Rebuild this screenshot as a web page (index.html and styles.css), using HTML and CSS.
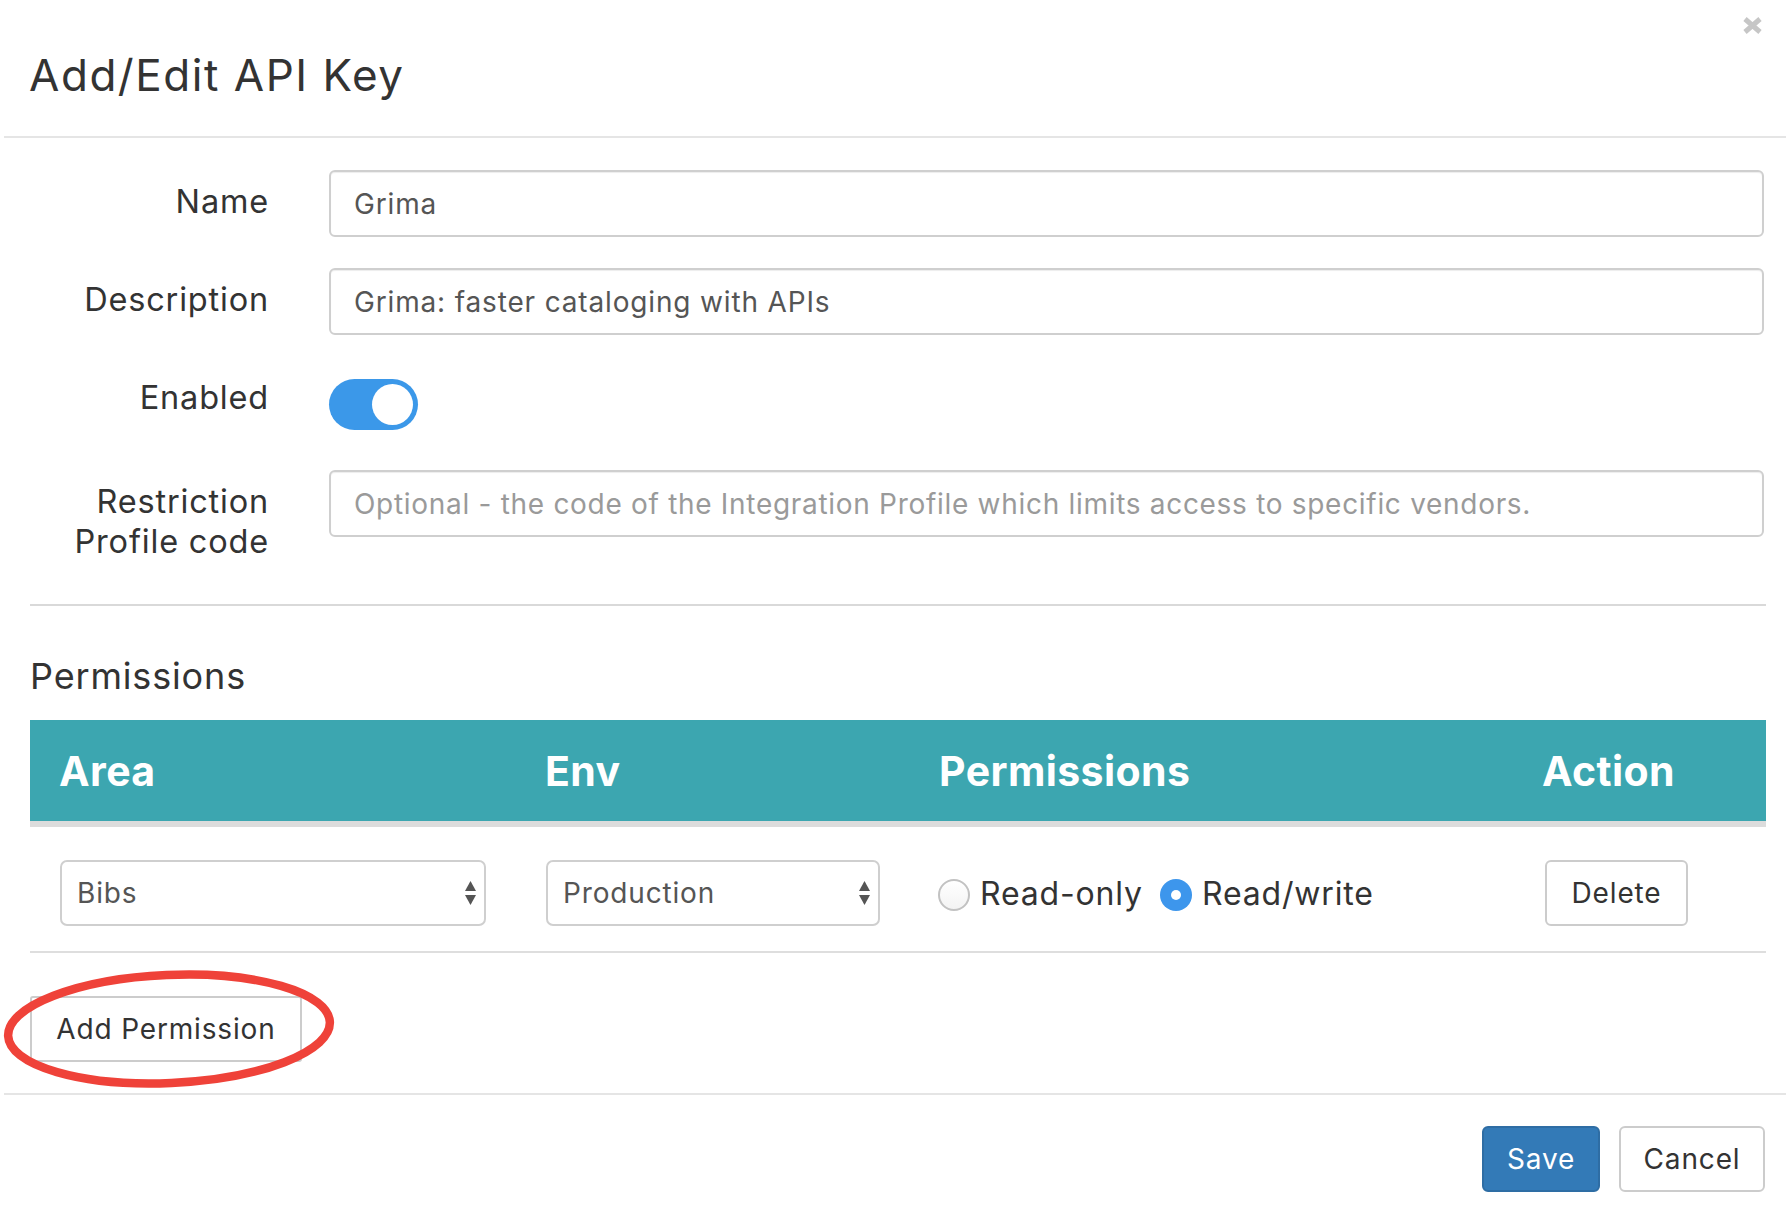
FILE: index.html
```html
<!DOCTYPE html>
<html lang="en">
<head>
<meta charset="utf-8">
<title>Add/Edit API Key</title>
<link rel="stylesheet" href="styles.css">
</head>
<body>
<div class="modal">
  <div class="modal-header">
    <h4 class="modal-title">Add/Edit API Key</h4>
    <button class="close" type="button" aria-label="Close">
      <svg width="19" height="17" viewBox="0 0 19 17"><path d="M2 2 L17 15 M17 2 L2 15" stroke="#c6c6c6" stroke-width="5" fill="none"/></svg>
    </button>
  </div>
  <div class="modal-body">
    <div class="form">
      <div class="form-row">
        <div class="form-label">Name</div>
        <div class="input">Grima</div>
      </div>
      <div class="form-row">
        <div class="form-label">Description</div>
        <div class="input">Grima: faster cataloging with APIs</div>
      </div>
      <div class="form-row row-enabled">
        <div class="form-label">Enabled</div>
        <div class="toggle"><span class="knob"></span></div>
      </div>
      <div class="form-row row-restrict">
        <div class="form-label">Restriction<br>Profile code</div>
        <div class="input placeholder">Optional - the code of the Integration Profile which limits access to specific vendors.</div>
      </div>
    </div>
    <hr class="divider">
    <h4 class="section-title">Permissions</h4>
    <div class="perm-table">
      <div class="perm-head">
        <div class="th">Area</div>
        <div class="th">Env</div>
        <div class="th">Permissions</div>
        <div class="th">Action</div>
      </div>
      <div class="perm-row">
        <div class="td">
          <div class="select"><span>Bibs</span><svg class="arrows" width="11" height="24" viewBox="0 0 11 24"><polygon points="0,10 5.5,0 11,10" fill="#555"/><polygon points="0,14 11,14 5.5,24" fill="#555"/></svg></div>
        </div>
        <div class="td">
          <div class="select"><span>Production</span><svg class="arrows" width="11" height="24" viewBox="0 0 11 24"><polygon points="0,10 5.5,0 11,10" fill="#555"/><polygon points="0,14 11,14 5.5,24" fill="#555"/></svg></div>
        </div>
        <div class="td radios">
          <label class="radio"><span class="dot"></span>Read-only</label>
          <label class="radio"><span class="dot checked"></span>Read/write</label>
        </div>
        <div class="td">
          <button class="btn btn-default btn-delete" type="button">Delete</button>
        </div>
      </div>
    </div>
    <div class="add-wrap">
      <button class="btn btn-default btn-add" type="button">Add Permission</button>
      <svg class="annotation" width="330" height="118" viewBox="0 0 330 118"><ellipse cx="165" cy="59" rx="161" ry="54" fill="none" stroke="#ef4239" stroke-width="8.5" transform="rotate(-2.5 165 59)"/></svg>
    </div>
  </div>
  <div class="modal-footer">
    <button class="btn btn-primary btn-save" type="button">Save</button>
    <button class="btn btn-default btn-cancel" type="button">Cancel</button>
  </div>
</div>
</body>
</html>
```
FILE: styles.css
```css
* { box-sizing: border-box; }

html, body {
  margin: 0;
  padding: 0;
  background: #fff;
}

body {
  font-family: "Inter", "Liberation Sans", sans-serif;
  font-size: 28px;
  letter-spacing: 0.03em;
  color: #333;
  width: 1790px;
  height: 1216px;
  overflow: hidden;
}

.modal {
  margin: 0 4px;
  background: #fff;
}

/* header */
.modal-header {
  height: 138px;
  padding: 0 24px 0 24px;
  border-bottom: 2px solid #e5e5e5;
  display: flex;
  justify-content: space-between;
  align-items: flex-start;
}

.modal-title {
  margin: 53px 0 0 1px;
  font-size: 44px;
  line-height: 44px;
  font-weight: 400;
  letter-spacing: 0.035em;
  color: #333;
}

.close {
  margin-top: 17px;
  padding: 0;
  border: 0;
  background: none;
  width: 19px;
  height: 17px;
  display: block;
}
.close svg { display: block; }

/* body */
.modal-body {
  padding: 0 20px 0 26px;
}

.form {
  padding: 32px 2px 0 0;
}

.form-row {
  display: grid;
  grid-template-columns: 239px 1fr;
  column-gap: 60px;
  align-items: start;
}
.form-row + .form-row { margin-top: 31px; }
.form-row.row-enabled { margin-top: 31px; }
.form-row.row-restrict { margin-top: 40px; }

.form-label {
  text-align: right;
  padding-top: 12px;
  font-size: 32.5px;
  line-height: 40px;
  letter-spacing: 0.025em;
  color: #333;
}

.input {
  height: 67px;
  border: 2px solid #cfcfcf;
  border-radius: 6px;
  box-shadow: inset 0 1px 1px rgba(0,0,0,.075);
  padding: 0 23px;
  display: flex;
  align-items: center;
  color: #555;
  white-space: nowrap;
  overflow: hidden;
}
.input.placeholder {
  color: #9a9a9a;
  letter-spacing: 0.7px;
}

.toggle {
  margin-top: 13px;
  width: 89px;
  height: 51px;
  border-radius: 26px;
  background: #3b98e9;
  display: flex;
  align-items: center;
  justify-content: flex-end;
  padding-right: 5px;
}
.knob {
  width: 41px;
  height: 41px;
  border-radius: 50%;
  background: #fff;
}

.divider {
  margin: 42px 0 0 0;
  border: 0;
  border-top: 2px solid #d9d9d9;
  height: 0;
}

.section-title {
  margin: 49px 0 22px 0;
  font-size: 36px;
  line-height: 43px;
  font-weight: 400;
  color: #333;
}

/* table */
.perm-head,
.perm-row {
  display: grid;
  grid-template-columns: 486px 394px 603px 253px;
}

.perm-head {
  height: 107px;
  background: #3ca6b0;
  border-bottom: 6px solid #dcdcdc;
}

.th {
  padding-left: 29px;
  display: flex;
  align-items: center;
  color: #fff;
  font-weight: 700;
  font-size: 41px;
  letter-spacing: 0.01em;
}

.perm-row {
  border-bottom: 2px solid #dedede;
}

.td {
  padding: 33px 30px 25px 30px;
  display: flex;
  align-items: center;
}

.select {
  width: 100%;
  height: 66px;
  border: 2px solid #cfcfcf;
  border-radius: 7px;
  padding: 0 8px 0 15px;
  display: flex;
  align-items: center;
  color: #555;
  background: #fff;
}
.select .arrows {
  margin-left: auto;
  display: block;
}

.radios {
  padding-left: 28px;
}
.radio {
  display: flex;
  align-items: center;
  font-size: 32px;
  color: #333;
}
.radio + .radio { margin-left: 17px; }

.dot {
  width: 32px;
  height: 32px;
  border-radius: 50%;
  border: 2px solid #c2c2c2;
  background: linear-gradient(#fff, #f3f3f3);
  margin-right: 10px;
  display: flex;
  align-items: center;
  justify-content: center;
  margin-top: 4px;
}
.dot.checked {
  border: 0;
  background: #3d96ec;
}
.dot.checked::after {
  content: "";
  width: 10px;
  height: 10px;
  border-radius: 50%;
  background: #fff;
}

/* buttons */
.btn {
  font-family: inherit;
  font-size: 28px;
  letter-spacing: 0.03em;
  height: 66px;
  border-radius: 6px;
  padding: 0;
  display: flex;
  align-items: center;
  justify-content: center;
  cursor: pointer;
}
.btn-default {
  background: #fff;
  border: 2px solid #cccccc;
  color: #333;
}
.btn-primary {
  background: #337ab7;
  border: 2px solid #2e6da4;
  color: #fff;
}

.btn-delete { width: 143px; margin-left: 2px; }

.add-wrap {
  position: relative;
  margin-top: 43px;
  width: 272px;
}
.btn-add {
  width: 272px;
  border-radius: 3px;
}
.annotation {
  position: absolute;
  left: -26px;
  top: -26px;
  overflow: visible;
  pointer-events: none;
}

/* footer */
.modal-footer {
  margin-top: 31px;
  border-top: 2px solid #e5e5e5;
  padding: 31px 21px 0 0;
  display: flex;
  justify-content: flex-end;
  gap: 19px;
}
.btn-save { width: 118px; }
.btn-cancel { width: 146px; }
```
